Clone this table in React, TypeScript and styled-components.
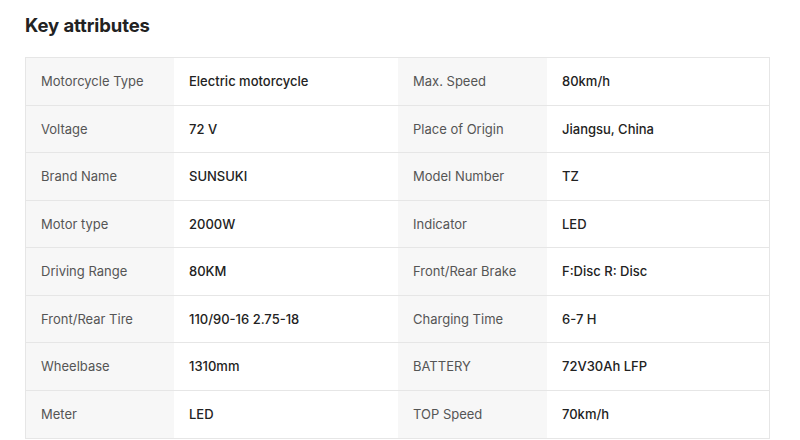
import React from "react";
import styled, { createGlobalStyle } from "styled-components";

type Attr = { label: string; value: string };

const attrs: Attr[][] = [
  [
    { label: "Motorcycle Type", value: "Electric motorcycle" },
    { label: "Max. Speed", value: "80km/h" },
  ],
  [
    { label: "Voltage", value: "72 V" },
    { label: "Place of Origin", value: "Jiangsu, China" },
  ],
  [
    { label: "Brand Name", value: "SUNSUKI" },
    { label: "Model Number", value: "TZ" },
  ],
  [
    { label: "Motor type", value: "2000W" },
    { label: "Indicator", value: "LED" },
  ],
  [
    { label: "Driving Range", value: "80KM" },
    { label: "Front/Rear Brake", value: "F:Disc R: Disc" },
  ],
  [
    { label: "Front/Rear Tire", value: "110/90-16 2.75-18" },
    { label: "Charging Time", value: "6-7 H" },
  ],
  [
    { label: "Wheelbase", value: "1310mm" },
    { label: "BATTERY", value: "72V30Ah LFP" },
  ],
  [
    { label: "Meter", value: "LED" },
    { label: "TOP Speed", value: "70km/h" },
  ],
];

const App: React.FC = () => {
  return (
    <>
      <GlobalStyle />
      <Section>
        <Title>Key attributes</Title>
        <AttrGrid>
          {attrs.map((pair, i) =>
            pair.map((attr) => (
              <React.Fragment key={`${i}-${attr.label}`}>
                <LabelCell $last={i === attrs.length - 1}>{attr.label}</LabelCell>
                <ValueCell $last={i === attrs.length - 1}>{attr.value}</ValueCell>
              </React.Fragment>
            ))
          )}
        </AttrGrid>
      </Section>
    </>
  );
};

export default App;

const GlobalStyle = createGlobalStyle`
  body {
    margin: 0;
    background: #ffffff;
    font-family: Inter, "Open Sans", Arial, sans-serif;
  }
`;

const Section = styled.div`
  width: 800px;
  height: 440px;
  box-sizing: border-box;
  padding: 13px 0 0 25px;
  overflow: hidden;
`;

const Title = styled.h2`
  margin: 0 0 20px 0;
  font-size: 18.5px;
  line-height: 24px;
  font-weight: 700;
  color: #222222;
  letter-spacing: -0.1px;
`;

const AttrGrid = styled.div`
  display: grid;
  grid-template-columns: 148px 224px 149px 222px;
  grid-auto-rows: 47.5px;
  box-sizing: border-box;
  width: 745px;
  border: 1px solid #e6e6e6;
`;

const Cell = styled.div<{ $last?: boolean }>`
  display: flex;
  align-items: center;
  padding: 0 15px;
  font-size: 13px;
  border-bottom: ${(p) => (p.$last ? "none" : "1px solid #e6e6e6")};
  white-space: nowrap;
`;

const LabelCell = styled(Cell)`
  background: #f7f7f7;
  color: #555555;
  font-weight: 400;
`;

const ValueCell = styled(Cell)`
  background: #ffffff;
  color: #222222;
  font-weight: 500;
`;
